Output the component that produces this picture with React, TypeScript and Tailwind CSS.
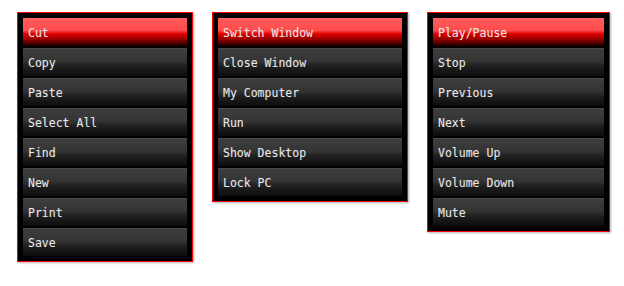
const menus: { items: string[]; width: string }[] = [
  {
    width: "w-[176px]",
    items: ["Cut", "Copy", "Paste", "Select All", "Find", "New", "Print", "Save"],
  },
  {
    width: "w-[196px]",
    items: ["Switch Window", "Close Window", "My Computer", "Run", "Show Desktop", "Lock PC"],
  },
  {
    width: "w-[183px]",
    items: ["Play/Pause", "Stop", "Previous", "Next", "Volume Up", "Volume Down", "Mute"],
  },
];

const MenuItem = ({ label, active }: { label: string; active: boolean }) => {
  return (
    <div
      className={
        active
          ? "h-[28px] flex items-center pl-[5px] pt-[2px] border-t border-[#ff6464] bg-[linear-gradient(to_bottom,#ff5a5a_0%,#ff4c4c_42%,#e00000_55%,#8a0000_78%,#1a0000_100%)]"
          : "h-[28px] flex items-center pl-[5px] pt-[2px] border-t border-[#4a4a4a] bg-[linear-gradient(to_bottom,#3e3e3e_0%,#343434_45%,#222222_60%,#0c0c0c_100%)]"
      }
    >
      <span className="font-['DejaVu_Sans_Mono',monospace] text-[11.5px] leading-none text-[#e8e8e8] [text-shadow:0_0_1px_rgba(255,255,255,0.2)]">
        {label}
      </span>
    </div>
  );
};

export default function App() {
  return (
    <div className="w-[624px] h-[286px] bg-white flex items-start gap-[19px] pt-[12px] pl-[17px]">
      {menus.map((menu, i) => (
        <div
          key={i}
          className={`${menu.width} bg-black border border-[#ff0000] p-[5px] flex flex-col gap-[2px] shadow-[1px_1px_2px_rgba(0,0,0,0.3)]`}
        >
          {menu.items.map((item, j) => (
            <MenuItem key={item} label={item} active={j === 0} />
          ))}
        </div>
      ))}
    </div>
  );
}
